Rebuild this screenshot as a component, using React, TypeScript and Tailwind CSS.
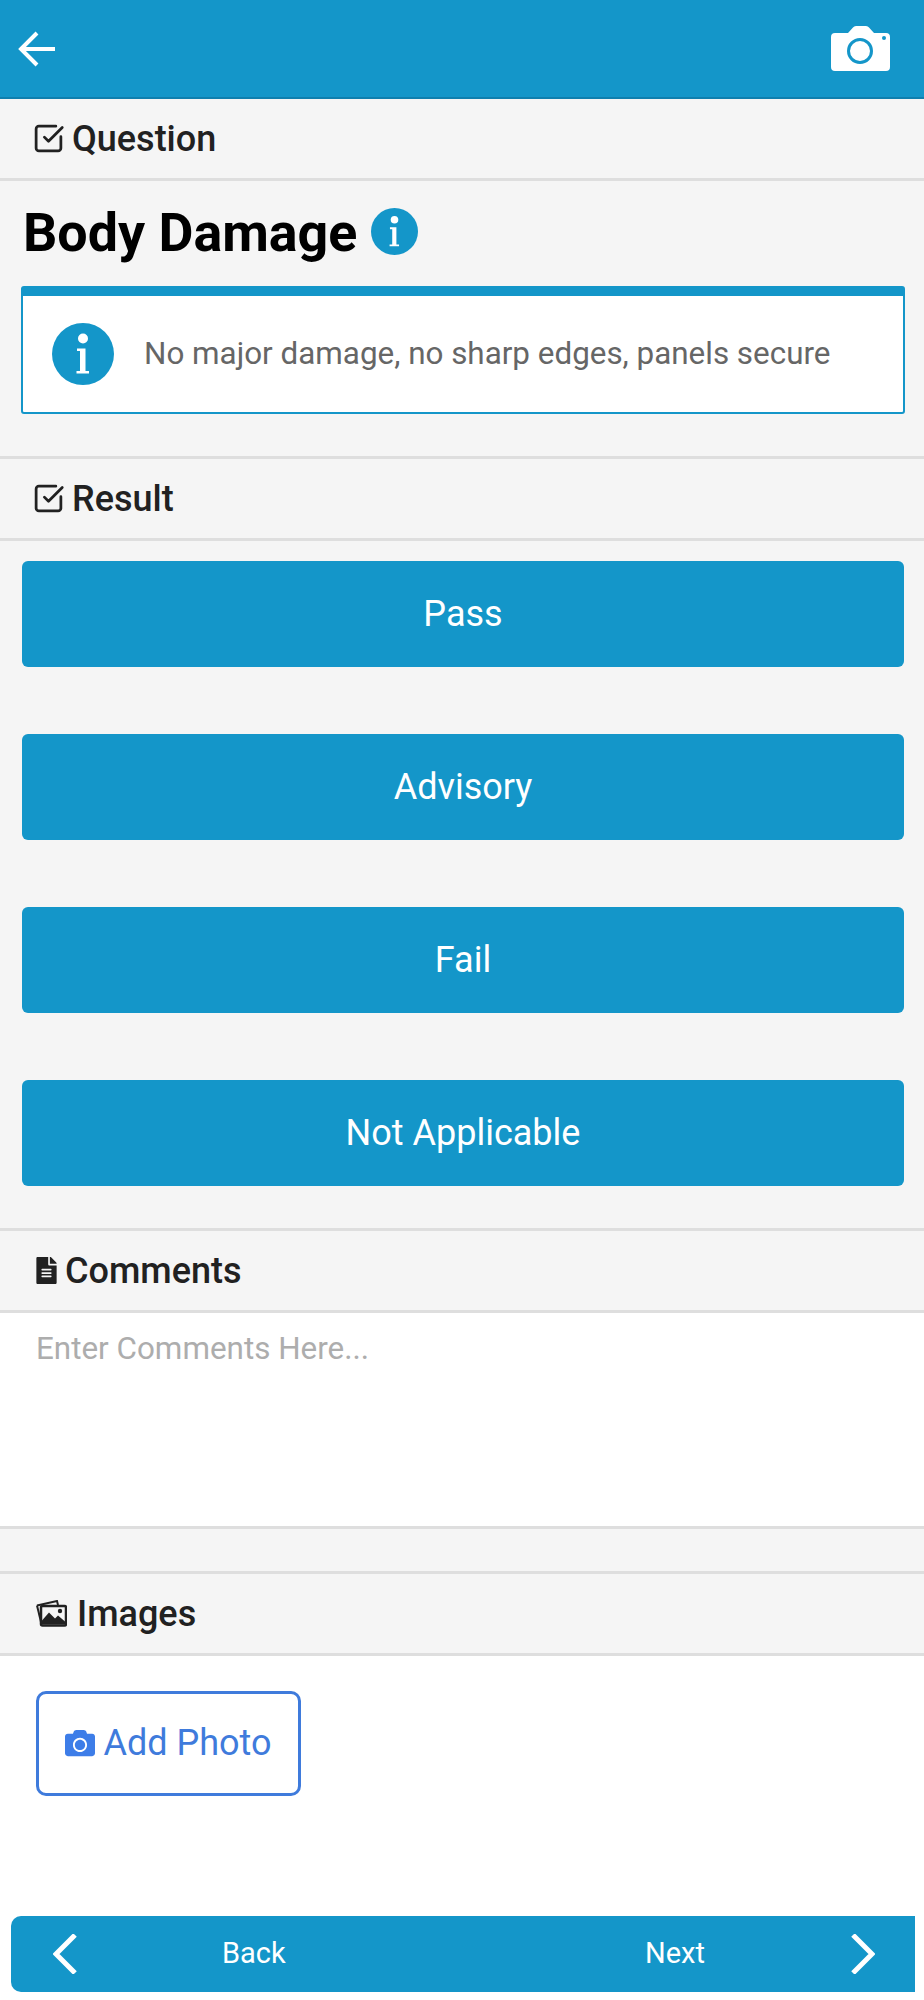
import { ReactNode } from 'react';
import { FaCamera, FaFileAlt } from 'react-icons/fa';
import { SquareCheckBig } from 'lucide-react';

const results = ['Pass', 'Advisory', 'Fail', 'Not Applicable'];

function InfoIcon({ className }: { className: string }) {
  return (
    <svg viewBox="0 0 62 62" className={className}>
      <circle cx="31" cy="31" r="31" fill="#1496c9" />
      <circle cx="31" cy="15.500" r="5" fill="#fff" />
      <path d="M25 25.500h8.500V48H37v2.500H24.500V48H28V28h-3z" fill="#fff" />
    </svg>
  );
}

function ImagesIcon() {
  return (
    <svg viewBox="0 0 31 27" className="h-[27px] w-[31px]" fill="#212121">
      <path d="M1 5.500 21 1l1 4" fill="none" stroke="#212121" strokeWidth="2" />
      <path d="M1 5.500 5 22" fill="none" stroke="#212121" strokeWidth="2" />
      <rect x="5" y="6" width="25" height="19.500" rx="1.500" fill="#f5f5f5" stroke="#212121" strokeWidth="2.500" />
      <path d="M6 24.500v-4l7-8 6 6 3-3 7 6v3z" />
      <circle cx="24" cy="11" r="2.200" />
    </svg>
  );
}

function SectionBar({ icon, label, gap }: { icon: ReactNode; label: string; gap: string }) {
  return (
    <div className={`flex h-[85px] shrink-0 items-center border-y-[3px] border-[#dedede] bg-[#f5f5f5] pl-[36px] text-[#212121] ${gap}`}>
      {icon}
      <span className="text-[36px] font-medium">{label}</span>
    </div>
  );
}

export default function App() {
  return (
    <div className="flex h-[2000px] flex-col bg-white font-['Roboto',sans-serif]">
      {/* Top bar */}
      <header className="flex h-[99px] shrink-0 items-center justify-between border-b-2 border-[#0f7fae] bg-[#1496c9] pl-[18px] pr-[34px]">
        <svg viewBox="0 0 37 36" className="h-[36px] w-[37px]" fill="none" stroke="#fff" strokeWidth="4">
          <path d="M37 18H4M19 2 3 18l16 16" />
        </svg>
        <svg viewBox="0 0 59 45" className="h-[45px] w-[59px]">
          <path
            d="M4 7h13l5-5.500Q23 0 25 0h10q2 0 3 1.500L43 7h12q4 0 4 4v30q0 4-4 4H4q-4 0-4-4V11q0-4 4-4z"
            fill="#fff"
          />
          <circle cx="29" cy="25" r="11.500" fill="#fff" stroke="#1496c9" strokeWidth="3" />
          <circle cx="53" cy="12" r="2" fill="#1496c9" />
        </svg>
      </header>

      <div className="shrink-0 bg-[#f5f5f5]">
        <div className="flex h-[82px] items-center gap-[7px] border-b-[3px] border-[#dedede] pl-[36px] text-[#212121]">
          <SquareCheckBig size={33} strokeWidth={2} className="-ml-[4px]" />
          <span className="text-[36px] font-medium">Question</span>
        </div>

        {/* Question title and help */}
        <div className="flex h-[105px] items-center gap-[14px] pl-[23px]">
          <h1 className="text-[53.800px] font-bold text-black">Body Damage</h1>
          <InfoIcon className="mb-[4px] h-[47px] w-[47px]" />
        </div>
        <div className="ml-[21px] mr-[19px] flex h-[128px] items-center gap-[30px] rounded-[3px] border-2 border-t-[10px] border-[#1496c9] bg-white pl-[29px]">
          <InfoIcon className="h-[62px] w-[62px]" />
          <span className="text-[31.400px] text-[#666]">No major damage, no sharp edges, panels secure</span>
        </div>
        <div className="h-[42px]" />

        <SectionBar icon={<SquareCheckBig size={33} strokeWidth={2} className="-ml-[4px]" />} label="Result" gap="gap-[7px]" />

        {/* Result buttons */}
        <div className="flex flex-col gap-[67px] pb-[42px] pl-[22px] pr-[20px] pt-[20px]">
          {results.map((result) => (
            <button key={result} className="h-[106px] rounded-[6px] bg-[#1496c9] text-[36px] text-white">
              {result}
            </button>
          ))}
        </div>

        <SectionBar icon={<FaFileAlt className="-ml-[3px] text-[27px]" />} label="Comments" gap="gap-[5px]" />
      </div>

      <textarea
        placeholder="Enter Comments Here..."
        className="h-[216px] w-full shrink-0 resize-none border-b-[3px] border-[#dedede] bg-white px-[36px] pt-[12px] text-[31.400px] outline-none placeholder:text-[#adadad]"
      />
      <div className="h-[42px] shrink-0 bg-[#f5f5f5]" />

      <SectionBar icon={<ImagesIcon />} label="Images" gap="gap-[10px]" />

      {/* Photos */}
      <div className="flex-1 px-[36px] pt-[35px]">
        <button className="flex h-[105px] w-[265px] items-center justify-center gap-[8px] rounded-[10px] border-[3px] border-[#3f7bdc] pb-[2px] text-[36px] text-[#3f7bdc]">
          <FaCamera className="text-[30px] text-[#3d7de8]" />
          Add Photo
        </button>
      </div>

      {/* Back / Next */}
      <footer className="mb-[8px] ml-[11px] mr-[9px] flex h-[76px] shrink-0 items-center justify-between rounded-l-[10px] bg-[#1496c9] pl-[42px] pr-[40px] text-[29px] text-white">
        <div className="flex items-center gap-[145px]">
          <svg viewBox="0 0 24 40" className="h-[40px] w-[24px]" fill="none" stroke="#fff" strokeWidth="5">
            <path d="M22 1 3 20l19 19" />
          </svg>
          <span>Back</span>
        </div>
        <div className="flex items-center gap-[146px]">
          <span>Next</span>
          <svg viewBox="0 0 24 40" className="h-[40px] w-[24px]" fill="none" stroke="#fff" strokeWidth="5">
            <path d="m2 1 19 19L2 39" />
          </svg>
        </div>
      </footer>
    </div>
  );
}
